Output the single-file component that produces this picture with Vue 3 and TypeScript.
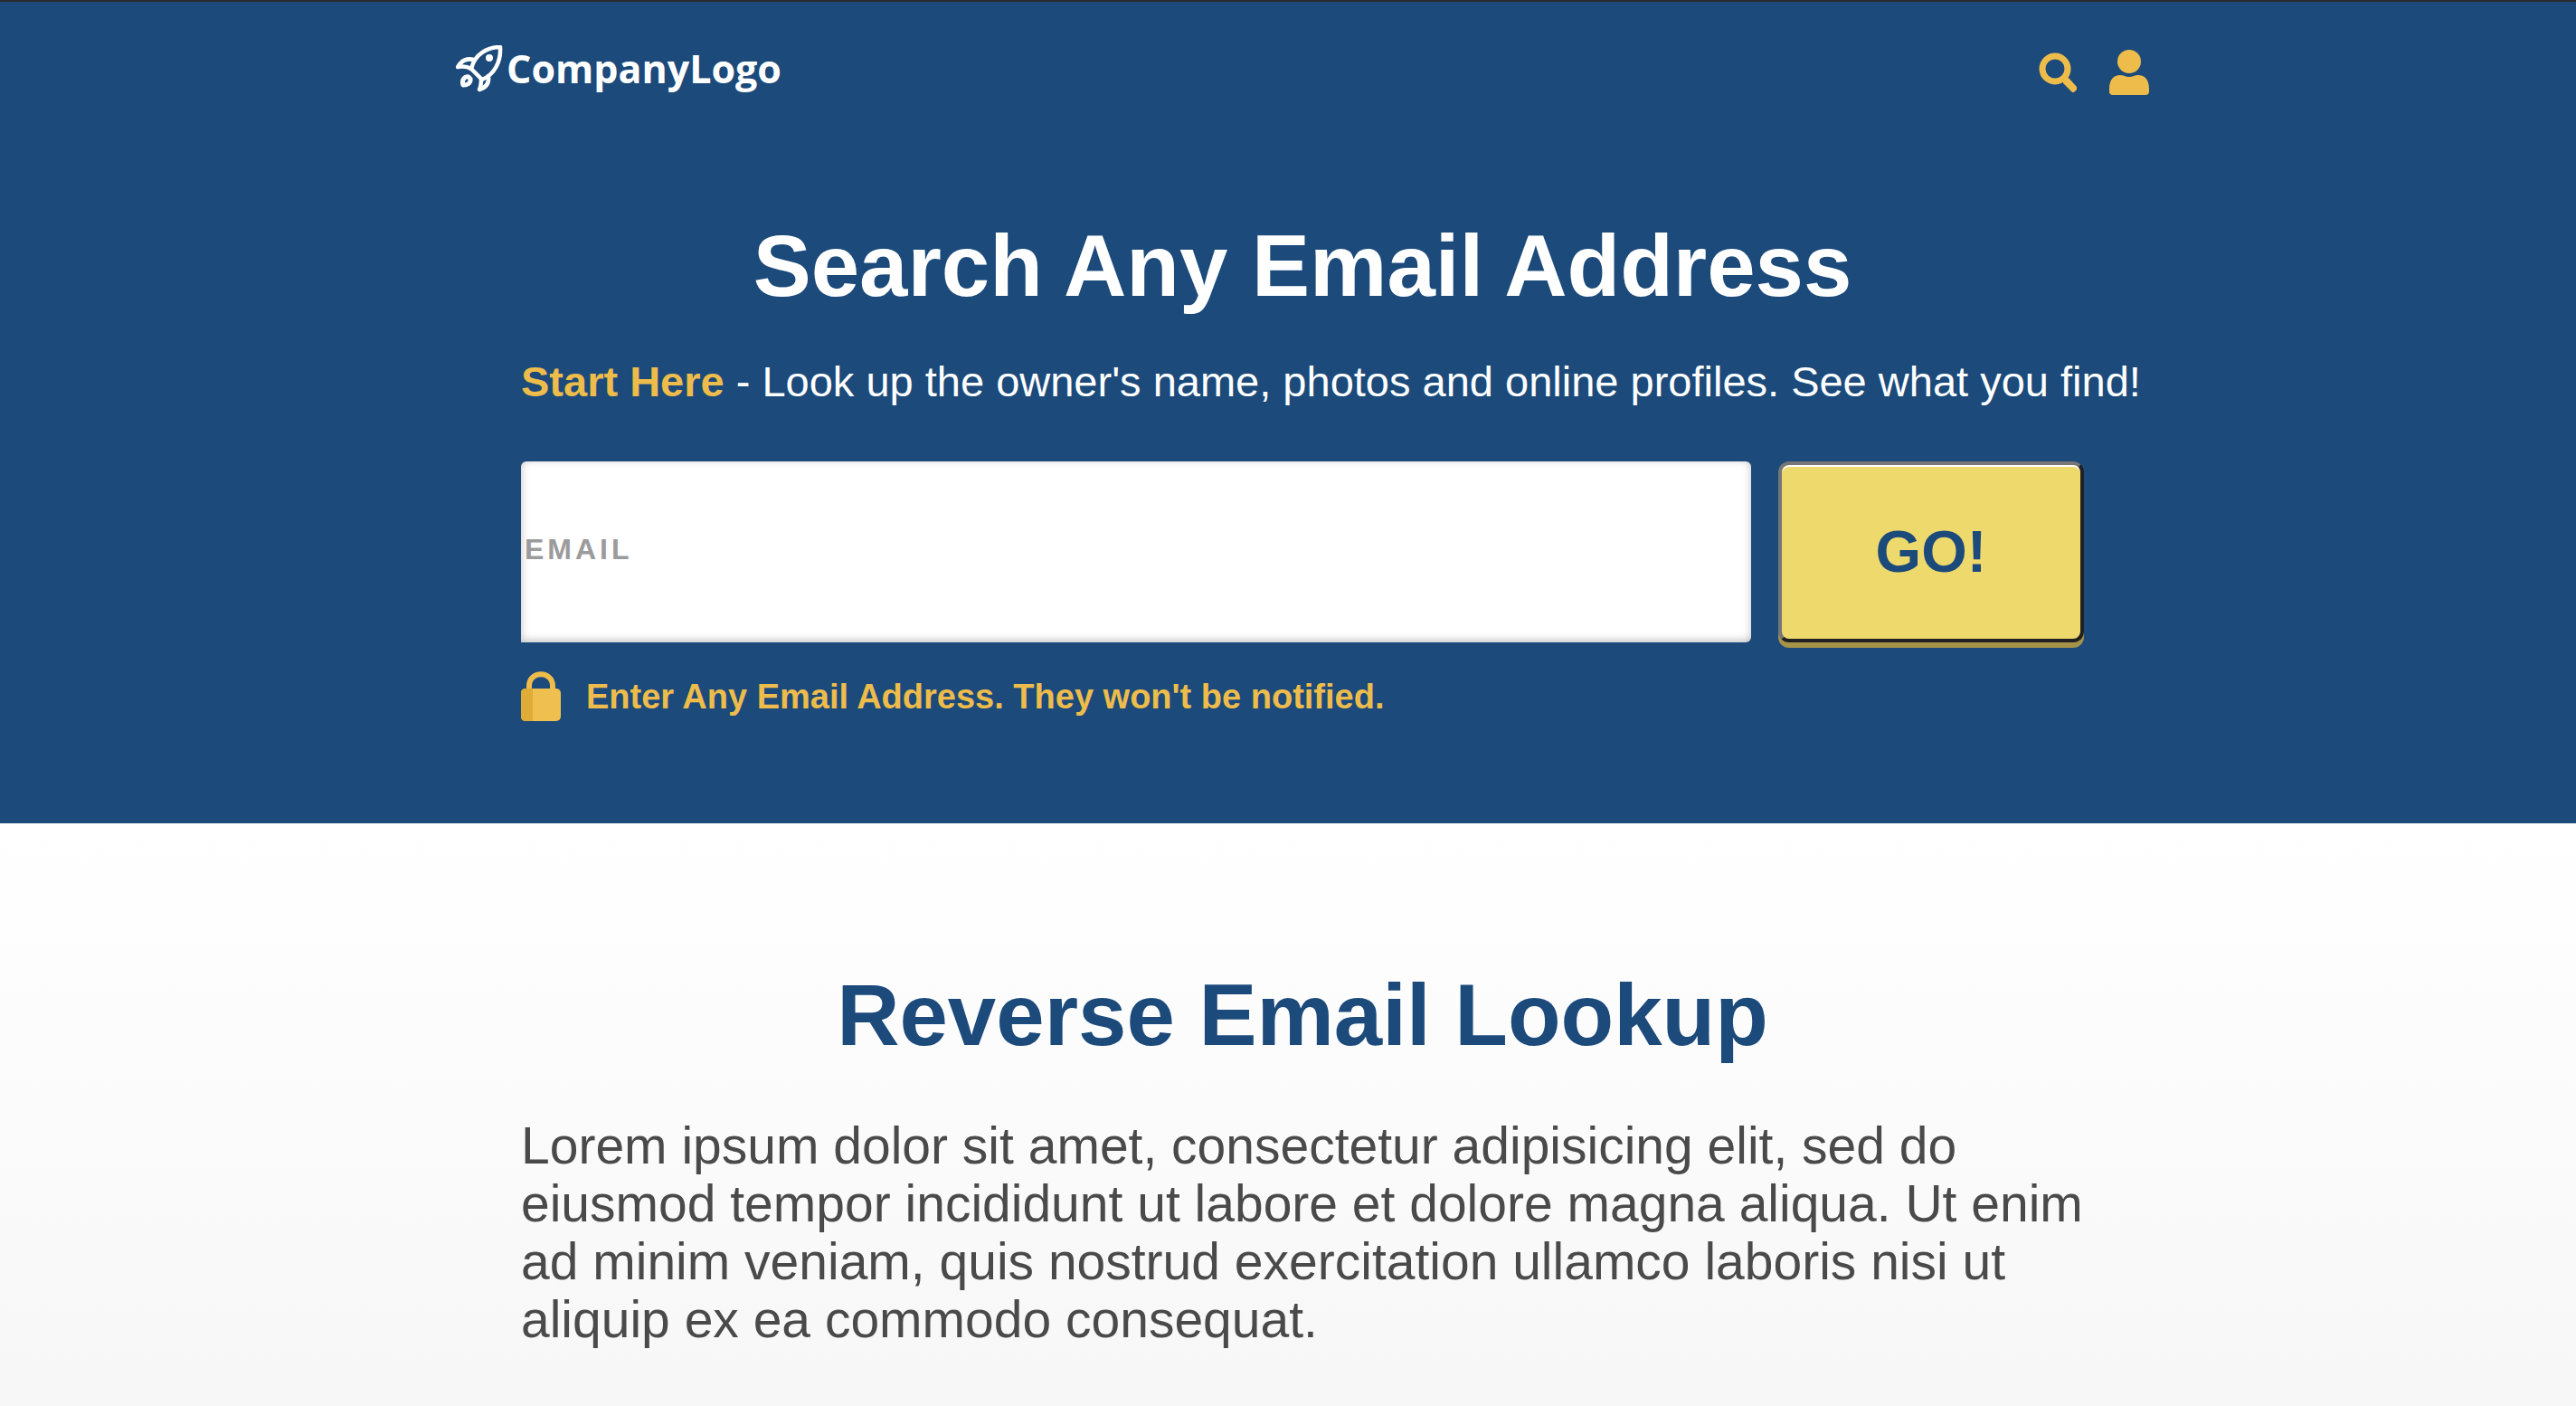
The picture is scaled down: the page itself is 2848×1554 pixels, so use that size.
<script setup lang="ts">
import { ref } from 'vue'

const email = ref('')
</script>

<template>
  <div class="page">
    <section class="hero">
      <header class="bar">
        <a class="logo" href="#">
          <svg class="rocket" viewBox="0 0 52 52" fill="none" stroke="#fff" stroke-width="4.5" stroke-linejoin="round" stroke-linecap="round" aria-hidden="true">
            <path d="M49 2C36 2 21 9 17 26L29 38C43 32 50 18 49 2Z" />
            <path d="M20 16C12 14 6 17 2 24C7 23 12 23 17 26" />
            <path d="M36 34C37 42 33 47 26 49C28 45 28 41 28 37" />
            <path d="M8 44C6 38 10 34 14 35C18 38 16 44 8 44Z" stroke-width="5" />
            <circle cx="37" cy="14" r="4" fill="#fff" stroke="none" />
          </svg>
          <span>CompanyLogo</span>
        </a>
        <nav class="tools">
          <a href="#" aria-label="Search">
            <svg width="44" height="52" viewBox="0 0 44 52" aria-hidden="true">
              <circle cx="18" cy="22" r="14" fill="none" stroke="#edbc4b" stroke-width="7" />
              <path d="M29 32L33 32L42 42V45L39 48H37L27 38V35Z" fill="#edbc4b" />
            </svg>
          </a>
          <a href="#" aria-label="Account">
            <svg width="44" height="52" viewBox="0 0 44 52" fill="#edbc4b" aria-hidden="true">
              <circle cx="22" cy="14" r="13" />
              <path d="M0 44C0 34 5 29 12 29C16 29 18 31 22 31S28 29 32 29C39 29 44 34 44 44V47Q44 51 40 51H4Q0 51 0 47Z" />
            </svg>
          </a>
        </nav>
      </header>

      <div class="content">
        <h1>Search Any Email Address</h1>
        <p class="tagline"><strong>Start Here</strong> - Look up the owner's name, photos and online profiles. See what you find!</p>
        <form class="lookup" @submit.prevent>
          <input v-model="email" type="email" placeholder="EMAIL" aria-label="Email" />
          <button type="submit">GO!</button>
        </form>
        <p class="note">
          <svg width="44" height="56" viewBox="0 0 44 56" aria-hidden="true">
            <path d="M9 20V16C9 -1 35 -1 35 16V20" fill="none" stroke="#edbc4b" stroke-width="6" />
            <rect y="19" width="44" height="36" rx="5" fill="#efbf50" />
            <path d="M13 19H5Q0 19 0 24V50Q0 55 5 55H13Z" fill="#dfad37" />
          </svg>
          <span>Enter Any Email Address. They won't be notified.</span>
        </p>
      </div>
    </section>

    <section class="about">
      <div class="content">
        <h2>Reverse Email Lookup</h2>
        <p>Lorem ipsum dolor sit amet, consectetur adipisicing elit, sed do eiusmod tempor incididunt ut labore et dolore magna aliqua. Ut enim ad minim veniam, quis nostrud exercitation ullamco laboris nisi ut aliquip ex ea commodo consequat.</p>
      </div>
    </section>
  </div>
</template>

<style>
body {
  margin: 0;
}
</style>

<style scoped>
.page {
  display: flex;
  flex-direction: column;
  min-height: 100vh;
  overflow: hidden;
  font-family: "Liberation Sans", Arial, sans-serif;
}

.page * {
  box-sizing: border-box;
}

.hero,
.about {
  padding-left: 32px;
}

.hero {
  padding-bottom: 112px;
  border-top: 2px solid #2b2b2b;
  background: #1b4a7b;
  color: #fff;
}

.bar {
  display: flex;
  justify-content: space-between;
  align-items: center;
  max-width: 1872px;
  height: 156px;
  margin: 0 auto;
}

.logo {
  display: flex;
  align-items: center;
  gap: 4px;
  padding-bottom: 8px;
  color: #fff;
  font: 700 43px/52px "Open Sans", sans-serif;
  text-decoration: none;
}

.rocket {
  width: 52px;
  height: 52px;
}

.tools {
  display: flex;
  gap: 34px;
}

.tools svg,
.note svg {
  display: block;
}

.content {
  max-width: 1728px;
  margin: 0 auto;
}

h1,
h2 {
  margin: 0;
  font-size: 96px;
  line-height: 112px;
  font-weight: 700;
  text-align: center;
}

h1 {
  padding-top: 80px;
}

.tagline {
  margin: 44px 0 60px;
  font-size: 47px;
  line-height: 56px;
  white-space: nowrap;
}

.tagline strong,
.note {
  color: #edbc4b;
}

.lookup {
  display: flex;
  gap: 30px;
}

.lookup input {
  flex: 1;
  min-width: 0;
  height: 200px;
  padding: 0 4px 6px;
  border: 0;
  border-radius: 6px 6px 6px 0;
  background: #fff;
  box-shadow: inset 0 -2px 10px rgba(0, 0, 0, 0.25);
  color: #333;
  font: 700 32px/40px "Liberation Sans", Arial, sans-serif;
  letter-spacing: 4px;
}

.lookup input::placeholder {
  color: #9b9b9b;
  opacity: 1;
}

.lookup button {
  width: 338px;
  height: 200px;
  border: 4px solid;
  border-color: #767676 #212121 #212121 #767676;
  border-radius: 12px;
  background: #eed96c;
  box-shadow: inset 0 2px 0 #fff, 0 6px 0 #a6934a;
  color: #1b4a7b;
  font: 700 65px/72px "Liberation Sans", Arial, sans-serif;
}

.note {
  display: flex;
  align-items: center;
  gap: 28px;
  margin: 32px 0 0;
  font-size: 38px;
  line-height: 48px;
  font-weight: 700;
}

.about {
  flex: 1;
  background: linear-gradient(#fff, #f7f7f7);
}

h2 {
  padding-top: 156px;
  color: #1b4a7b;
}

.about p {
  margin: 56px 0 48px;
  color: #4a4a4a;
  font-size: 57px;
  line-height: 64px;
}
</style>
